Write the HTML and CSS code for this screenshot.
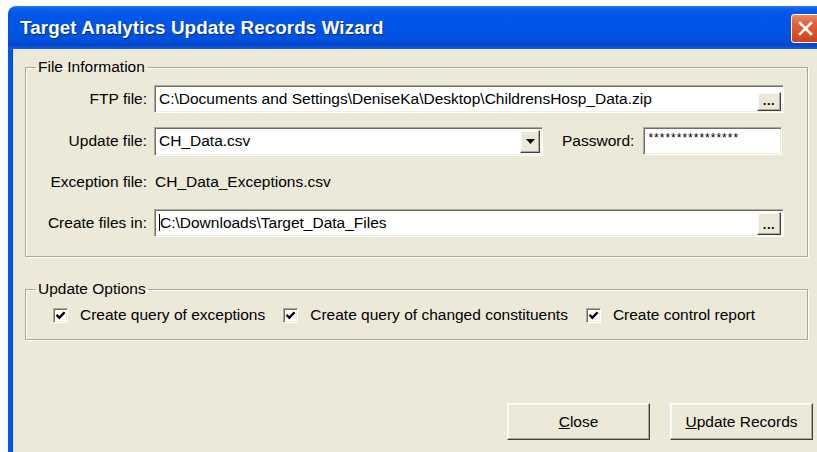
FILE: index.html
```html
<!DOCTYPE html>
<html>
<head>
<meta charset="utf-8">
<title>Target Analytics Update Records Wizard</title>
<link rel="stylesheet" href="styles.css">
</head>
<body>
<div class="window">
  <div class="titlebar">
    <span class="title">Target Analytics Update Records Wizard</span>
    <span class="close-btn">
      <svg width="15" height="15" viewBox="0 0 15 15"><path d="M2 2 L13 13 M13 2 L2 13" stroke="#fff" stroke-width="2.6" stroke-linecap="square"/></svg>
    </span>
  </div>
  <div class="client">
    <fieldset class="group group-file">
      <legend>File Information</legend>
      <div class="row">
        <span class="lbl">FTP file:</span>
        <div class="field field-path sunken">
          <span class="field-text">C:\Documents and Settings\DeniseKa\Desktop\ChildrensHosp_Data.zip</span>
          <span class="browse raised browse-sm">...</span>
        </div>
      </div>
      <div class="row">
        <span class="lbl">Update file:</span>
        <div class="field field-combo sunken">
          <span class="field-text">CH_Data.csv</span>
          <span class="drop raised">
            <svg width="9" height="5" viewBox="0 0 9 5"><path d="M0 0 H9 L4.5 5 Z" fill="#000"/></svg>
          </span>
        </div>
        <span class="lbl-pass">Password:</span>
        <div class="field field-pass sunken">
          <span class="stars">****************</span>
        </div>
      </div>
      <div class="row row-info">
        <span class="lbl">Exception file:</span>
        <span class="info-value">CH_Data_Exceptions.csv</span>
      </div>
      <div class="row">
        <span class="lbl">Create files in:</span>
        <div class="field field-path sunken">
          <span class="field-text"><span class="caret"></span>C:\Downloads\Target_Data_Files</span>
          <span class="browse raised browse-lg">...</span>
        </div>
      </div>
    </fieldset>

    <fieldset class="group group-options">
      <legend>Update Options</legend>
      <div class="checks">
        <span class="check-item"><span class="checkbox sunken"><svg width="11" height="11" viewBox="0 0 11 11"><polyline points="1.5,4.8 4.3,7.8 9.6,2.2" fill="none" stroke="#000" stroke-width="2.4"/></svg></span><span class="check-label">Create query of exceptions</span></span>
        <span class="check-item"><span class="checkbox sunken"><svg width="11" height="11" viewBox="0 0 11 11"><polyline points="1.5,4.8 4.3,7.8 9.6,2.2" fill="none" stroke="#000" stroke-width="2.4"/></svg></span><span class="check-label">Create query of changed constituents</span></span>
        <span class="check-item"><span class="checkbox sunken"><svg width="11" height="11" viewBox="0 0 11 11"><polyline points="1.5,4.8 4.3,7.8 9.6,2.2" fill="none" stroke="#000" stroke-width="2.4"/></svg></span><span class="check-label">Create control report</span></span>
      </div>
    </fieldset>

    <div class="actions">
      <span class="btn raised"><u>C</u>lose</span>
      <span class="btn raised"><u>U</u>pdate Records</span>
    </div>
  </div>
</div>
</body>
</html>
```

FILE: styles.css
```css
html, body {
  margin: 0;
  padding: 0;
  height: 100%;
  overflow: hidden;
  background: #fff;
}

body {
  font-family: "Liberation Sans", Arial, sans-serif;
  font-size: 15.5px;
  color: #000;
}

/* window frame */
.window {
  margin: 6px 0 0 8px;
  width: 822px;
}

.titlebar {
  height: 43px;
  box-sizing: border-box;
  display: flex;
  align-items: flex-start;
  padding-left: 12px;
  border-radius: 8px 8px 0 0;
  background: linear-gradient(to bottom,
    #2a78f5 0px, #0a5cef 3px, #0057e8 10px, #0054e3 24px,
    #0050dc 34px, #0046cc 39px, #0a4fd6 41px, #1d63ea 43px);
}

.title {
  color: #fff;
  font-weight: bold;
  font-size: 18.8px;
  line-height: 43px;
  letter-spacing: 0.1px;
  text-shadow: 1px 1px 0 #0a2a8a;
}

.close-btn {
  margin-left: auto;
  margin-top: 8px;
  margin-right: 10px;
  width: 27px;
  height: 27px;
  border: 1px solid #fff;
  border-radius: 3px;
  background: linear-gradient(to bottom, #ec8a66 0%, #e2623b 30%, #d84a22 80%, #c9431f 100%);
  display: flex;
  align-items: center;
  justify-content: center;
}

.client {
  height: 403px;
  background: #ece9d8;
  border-left: 4px solid #0758ea;
  box-shadow: inset 1px 0 0 #0441c4;
  padding-top: 9px;
  box-sizing: border-box;
}

/* 3D edges */
.sunken {
  border: 1px solid;
  border-color: #aca899 #fff #fff #aca899;
  box-shadow: inset 1px 1px 0 #716f64, inset -1px -1px 0 #f1efe2;
  background: #fff;
}

.raised {
  border: 1px solid;
  border-color: #fff #404040 #404040 #fff;
  box-shadow: inset -1px -1px 0 #aca899, inset 1px 1px 0 #f7f6f0;
  background: #ece9d8;
}

/* group boxes */
.group {
  box-sizing: border-box;
  width: 783px;
  margin: 0 0 0 13px;
  padding: 0;
  border: 1px solid #aca899;
  box-shadow: inset 1px 1px 0 #fff, 1px 1px 0 #fff;
  min-inline-size: 0;
}

.group legend {
  margin-left: 10px;
  padding: 0 2px;
  line-height: 18px;
}

.group-file {
  padding: 9px 0 19px 0;
  display: flex;
  flex-direction: column;
  gap: 14px;
}

.row {
  display: flex;
  align-items: center;
  height: 28px;
}

.row-info {
  height: 26px;
}

.lbl {
  width: 121px;
  text-align: right;
  margin-right: 7px;
  white-space: nowrap;
}

.field {
  box-sizing: border-box;
  height: 28px;
  display: flex;
  align-items: center;
}

.field-text {
  padding-left: 4px;
  white-space: nowrap;
  flex: 1;
}

.field-path {
  width: 630px;
  padding-right: 2px;
}

.browse {
  box-sizing: border-box;
  width: 24px;
  font-weight: bold;
  font-size: 13px;
  letter-spacing: 0.5px;
  display: flex;
  justify-content: center;
  align-items: flex-end;
  padding-bottom: 3px;
  line-height: 1;
}

.browse-sm {
  height: 19px;
  align-self: flex-end;
  margin-bottom: 1px;
}

.browse-lg {
  height: 23px;
}

.caret {
  display: inline-block;
  width: 1px;
  height: 17px;
  background: #000;
  vertical-align: -3px;
}

.field-combo {
  width: 389px;
  height: 29px;
  padding-right: 2px;
}

.drop {
  box-sizing: border-box;
  width: 20px;
  height: 23px;
  display: flex;
  align-items: center;
  justify-content: center;
}

.lbl-pass {
  margin-left: 19px;
  margin-right: 9px;
}

.field-pass {
  width: 139px;
  align-items: flex-start;
}

.stars {
  font-size: 12px;
  letter-spacing: 1px;
  padding: 4px 0 0 4px;
  line-height: 12px;
}

.info-value {
  margin-left: 1px;
}

.group-options {
  margin-top: 23px;
  padding: 8px 0 15px 0;
}

.checks {
  display: flex;
  align-items: center;
  height: 18px;
  gap: 18px;
  padding-left: 27px;
}

.check-item {
  display: flex;
  align-items: center;
  gap: 12px;
  white-space: nowrap;
}

.checkbox {
  box-sizing: border-box;
  width: 15px;
  height: 15px;
  display: flex;
  align-items: center;
  justify-content: center;
}

/* dialog buttons */
.actions {
  display: flex;
  justify-content: flex-end;
  gap: 20px;
  margin-top: 63px;
  padding-right: 17px;
}

.btn {
  box-sizing: border-box;
  width: 143px;
  height: 37px;
  display: flex;
  align-items: center;
  justify-content: center;
}
```
